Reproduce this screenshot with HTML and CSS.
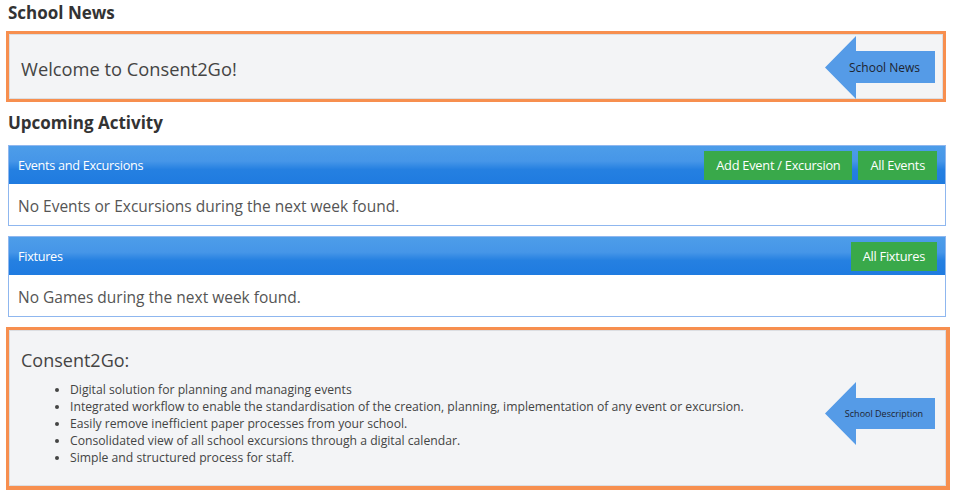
FILE: index.html
```html
<!DOCTYPE html>
<html>
<head>
<meta charset="utf-8">
<link rel="stylesheet" href="styles.css">
</head>
<body>
<div class="page">
  <h2 class="section-title first">School News</h2>
  <div class="annot annot-news">
    <div class="well well-news">
      <p class="welcome">Welcome to Consent2Go!</p>
    </div>
    <div class="callout callout-news">
      <svg class="callout-shape" width="111" height="63" viewBox="0 0 111 63"><polygon points="0,31.5 31,0 31,15 110,15 110,47 31,47 31,63" fill="#559be7"/></svg>
      <span class="callout-text">School News</span>
    </div>
  </div>

  <h2 class="section-title">Upcoming Activity</h2>

  <div class="panel">
    <div class="panel-head">
      <span class="panel-title">Events and Excursions</span>
      <div class="panel-actions">
        <span class="btn">Add Event / Excursion</span>
        <span class="btn">All Events</span>
      </div>
    </div>
    <div class="panel-body">No Events or Excursions during the next week found.</div>
  </div>

  <div class="panel">
    <div class="panel-head">
      <span class="panel-title">Fixtures</span>
      <div class="panel-actions">
        <span class="btn">All Fixtures</span>
      </div>
    </div>
    <div class="panel-body">No Games during the next week found.</div>
  </div>

  <div class="annot annot-desc">
    <div class="well well-desc">
      <h3 class="desc-title">Consent2Go:</h3>
      <ul class="desc-list">
        <li>Digital solution for planning and managing events</li>
        <li>Integrated workflow to enable the standardisation of the creation, planning, implementation of any event or excursion.</li>
        <li>Easily remove inefficient paper processes from your school.</li>
        <li>Consolidated view of all school excursions through a digital calendar.</li>
        <li>Simple and structured process for staff.</li>
      </ul>
    </div>
    <div class="callout callout-desc">
      <svg class="callout-shape" width="111" height="63" viewBox="0 0 111 63"><polygon points="0,31.5 31,0 31,16 110,16 110,47 31,47 31,63" fill="#559be7"/></svg>
      <span class="callout-text small">School Description</span>
    </div>
  </div>
</div>
</body>
</html>
```

FILE: styles.css
```css
* { box-sizing: border-box; }
html, body { margin: 0; padding: 0; background: #fff; }
body { font-family: "Open Sans", "Liberation Sans", sans-serif; color: #333; }

.page {
  width: 938px;
  margin-left: 8px;
  padding-top: 3px;
}

.section-title {
  margin: 11px 0 12px;
  font-size: 17px;
  line-height: 20px;
  font-weight: 700;
  color: #333;
}
.section-title.first { margin: 0 0 8px; }

.annot {
  position: relative;
  margin-left: -2px;
  border: 3px solid #f78f4f;
}
.annot-news { width: 940px; }
.annot-desc {
  width: 944px;
  margin-top: 10px;
  border-width: 3px 4px 4px 3px;
}

.well {
  background: #f3f4f6;
  border: 1px solid #dcdee2;
}
.well-news { height: 65px; padding: 22px 11px 0; }
.welcome {
  margin: 0;
  font-size: 18.3px;
  line-height: 24px;
  color: #444;
}

.well-desc { padding: 17px 11px 19px; }
.desc-title {
  margin: 0 0 9px;
  font-size: 18px;
  line-height: 24px;
  font-weight: 400;
  color: #444;
}
.desc-list {
  margin: 0;
  padding-left: 49px;
  font-size: 12.2px;
  line-height: 17px;
  color: #444;
}

.callout {
  position: absolute;
  width: 111px;
  height: 63px;
}
.callout-news { right: 7px; top: 2px; }
.callout-desc { right: 10px; top: 52px; }
.callout-shape { display: block; position: absolute; left: 0; top: 0; }
.callout-text {
  position: absolute;
  left: 8px;
  right: 0;
  top: 0;
  height: 63px;
  display: flex;
  align-items: center;
  justify-content: center;
  font-size: 12px;
  color: #1d2430;
}
.callout-text.small { font-size: 9px; left: 7px; }

.panel {
  border: 1px solid #8fb7ef;
  margin-bottom: 10px;
}
.panel-head {
  height: 38px;
  display: flex;
  align-items: center;
  justify-content: space-between;
  padding: 0 8px 0 9px;
  background: linear-gradient(#4d9de9 0%, #4696e8 40%, #2580e1 62%, #1f7be0 100%);
}
.panel-title {
  color: #fff;
  font-size: 12.7px;
  letter-spacing: -0.3px;
}
.panel-actions { display: flex; gap: 6px; }
.btn {
  display: inline-flex;
  align-items: center;
  height: 29px;
  padding: 0 12px;
  background: #39a94a;
  color: #fff;
  font-size: 12.8px;
  letter-spacing: -0.25px;
}
.panel-body {
  padding: 11px 9px 8px;
  font-size: 15.5px;
  line-height: 22px;
  color: #555;
  background: #fff;
}
```
